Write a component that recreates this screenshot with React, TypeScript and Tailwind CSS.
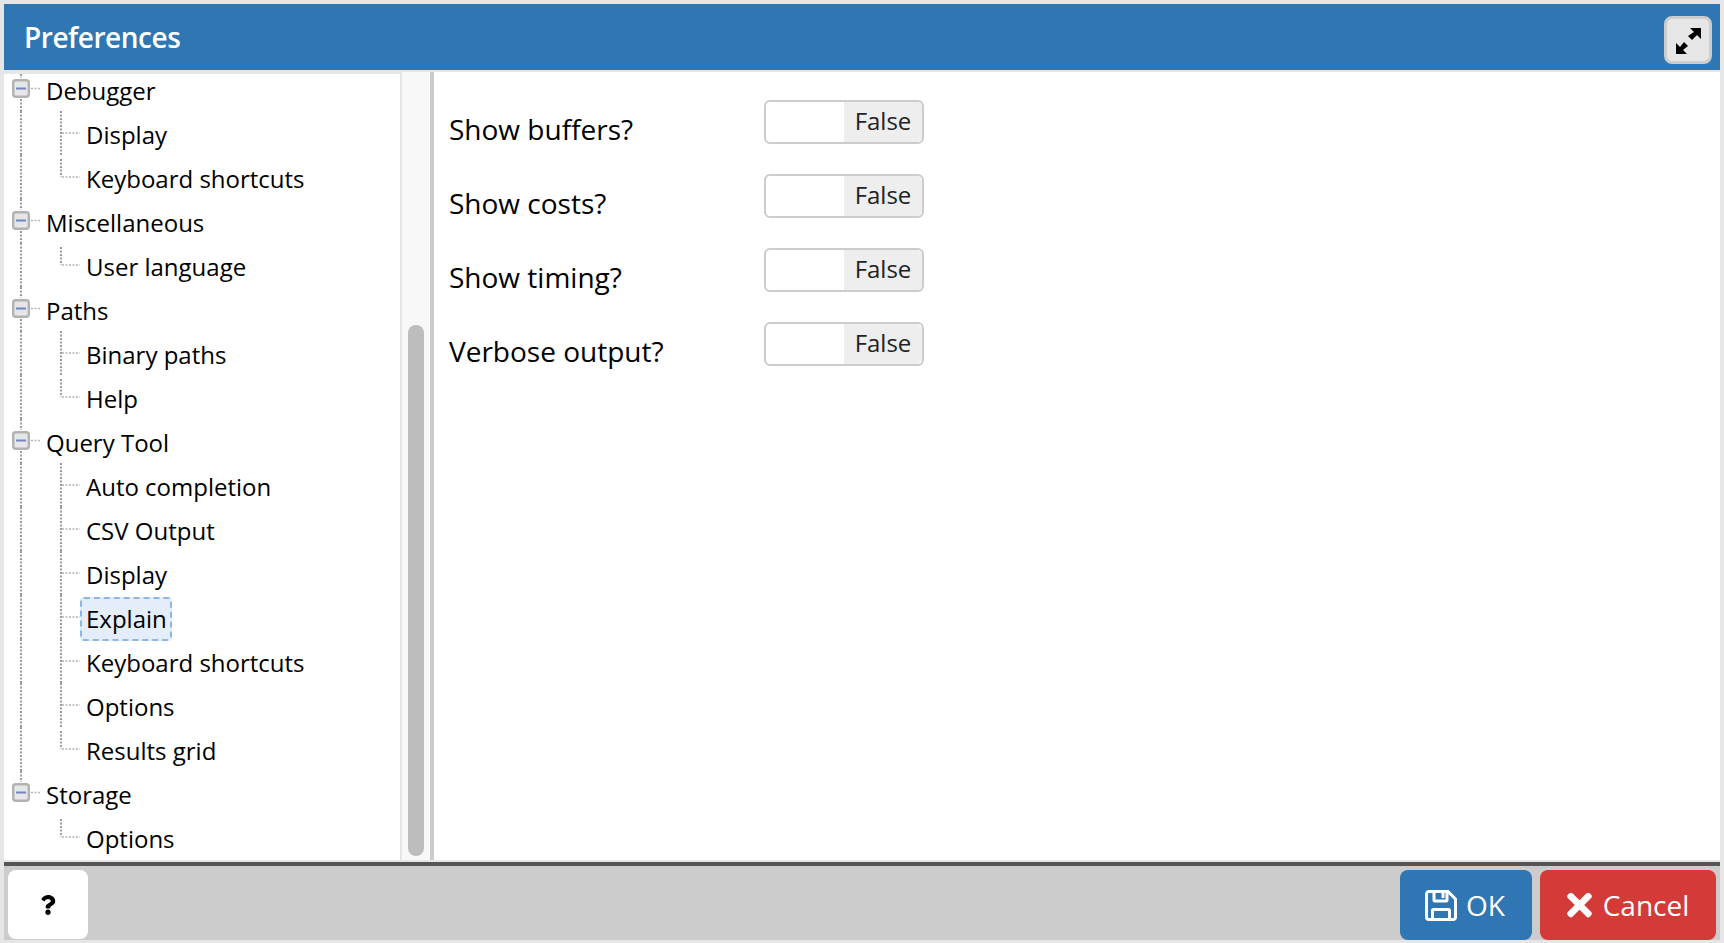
import { FaQuestion, FaTimes } from "react-icons/fa";

type Row = {
  label: string;
  root?: boolean;
  last?: boolean;
  selected?: boolean;
  tail?: boolean;
};

const rows: Row[] = [
  { label: "Debugger", root: true },
  { label: "Display" },
  { label: "Keyboard shortcuts", last: true },
  { label: "Miscellaneous", root: true },
  { label: "User language", last: true },
  { label: "Paths", root: true },
  { label: "Binary paths" },
  { label: "Help", last: true },
  { label: "Query Tool", root: true },
  { label: "Auto completion" },
  { label: "CSV Output" },
  { label: "Display" },
  { label: "Explain", selected: true },
  { label: "Keyboard shortcuts" },
  { label: "Options" },
  { label: "Results grid", last: true },
  { label: "Storage", root: true, tail: true },
  { label: "Options", last: true, tail: true },
];

const fields = ["Show buffers?", "Show costs?", "Show timing?", "Verbose output?"];

const vDots = { stroke: "#9c9c9c", strokeWidth: 2, strokeDasharray: "2 1.5", fill: "none" };
const hDots = { stroke: "#b4b4b4", strokeWidth: 1.5, strokeDasharray: "2 1.5", fill: "none" };

function RootGuide({ tail }: { tail?: boolean }) {
  return (
    <svg width="42" height="44" className="shrink-0">
      <line x1="17" y1="0" x2="17" y2="11" {...vDots} />
      {!tail && <line x1="17" y1="32" x2="17" y2="44" {...vDots} />}
      <line x1="27" y1="21.5" x2="36" y2="21.5" {...hDots} />
      <rect x="9.2" y="13.2" width="15.6" height="16.6" rx="2.5" fill="#e6e6e8" stroke="#b2b2b2" strokeWidth="2.4" />
      <rect x="12" y="20.5" width="10" height="2" fill="#6f86c4" />
    </svg>
  );
}

function ChildGuide({ last, tail }: { last?: boolean; tail?: boolean }) {
  return (
    <svg width="82" height="44" className="shrink-0">
      {!tail && <line x1="17" y1="0" x2="17" y2="44" {...vDots} />}
      <line x1="57" y1={last ? 4 : 0} x2="57" y2={last ? 22 : 44} {...vDots} />
      <line x1="58" y1="22" x2="76" y2="22" {...hDots} />
    </svg>
  );
}

function TreeRow({ row }: { row: Row }) {
  return (
    <div className="flex h-11 items-center text-[24px] text-black">
      {row.root ? <RootGuide tail={row.tail} /> : <ChildGuide last={row.last} tail={row.tail} />}
      {row.selected ? (
        <span className="-ml-[6px] mt-[4px] flex h-[44px] items-center rounded border-2 border-dashed border-[#8fb5e4] bg-[#e3eefa] pl-[4px] pr-[3px]">
          {row.label}
        </span>
      ) : (
        <span className="mt-[3px]">{row.label}</span>
      )}
    </div>
  );
}

function SwitchField({ label }: { label: string }) {
  return (
    <div className="flex h-[74px] items-start">
      <span className="mt-[7px] w-[315px] text-[28px] leading-[44px] text-black">{label}</span>
      <div className="flex h-11 w-[160px] overflow-hidden rounded-md border-2 border-[#cccccc] bg-white">
        <div className="w-[78px]" />
        <div className="flex flex-1 items-center justify-center bg-[#eeeeee] pb-[2px] text-[24px] text-[#222222]">False</div>
      </div>
    </div>
  );
}

function ExpandIcon() {
  return (
    <svg width="38" height="38" viewBox="0 0 38 38" fill="currentColor">
      <polygon points="21,7 32,7 32,18 28,14 23,19 19,15 25,11" />
      <polygon points="7,33 7,22 11,26 15,21 19,25 14,29 18,33" />
    </svg>
  );
}

function SaveIcon() {
  return (
    <svg width="32" height="31" viewBox="0 0 32 31" fill="none" stroke="currentColor" strokeWidth="3">
      <path d="M4 1.5H23L30.5 9V27a2.5 2.5 0 0 1-2.5 2.5H4A2.5 2.5 0 0 1 1.500 27V4A2.500 2.500 0 0 1 4 1.500z" />
      <path d="M9 2v8a1 1 0 0 0 1 1h11a1 1 0 0 0 1-1V2" />
      <path d="M7.500 29V20.500a1 1 0 0 1 1-1h15a1 1 0 0 1 1 1V29" />
      <rect x="16.500" y="2" width="3" height="6" fill="currentColor" stroke="none" />
    </svg>
  );
}

export default function App() {
  return (
    <div className="flex h-[943px] w-full flex-col bg-[#e6e6e6] pb-[3px] pl-1 pr-1 pt-1 font-['Open_Sans',sans-serif]">
      <header className="flex h-[66px] shrink-0 items-center justify-between bg-[#2f76b2] pl-[20px] pr-[8px]">
        <h1 className="text-[28px] font-semibold tracking-[-0.45px] text-white">Preferences</h1>
        <button className="mt-[5px] flex h-[48px] w-[48px] items-center justify-center rounded-lg border-[3px] border-[#cccccc] bg-[#e6e6e6] text-black">
          <ExpandIcon />
        </button>
      </header>

      <main className="flex min-h-0 flex-1 bg-[#e6e6e6] pb-[2px] pt-[2px]">
        <aside className="mt-[2px] flex w-[396px] shrink-0 overflow-hidden bg-white">
          <div className="-mt-[7px] w-full">
            {rows.map((row, i) => (
              <TreeRow key={i} row={row} />
            ))}
          </div>
        </aside>
        <div className="flex w-[30px] shrink-0 flex-col border-l-2 border-[#e6e6e6] bg-[#f8f8f8] px-[6px] pb-[4px] pt-[253px]">
          <div className="flex-1 rounded-lg bg-[#bdbdbd]" />
        </div>
        <section className="flex-1 border-l-4 border-[#cccccc] bg-white pl-[15px] pt-[28px]">
          {fields.map((f) => (
            <SwitchField key={f} label={f} />
          ))}
        </section>
      </main>

      <footer className="flex h-[78px] shrink-0 items-stretch justify-between border-t-4 border-[#555555] bg-[#cccccc] pl-[4px] pr-[4px] pt-[4px]">
        <button className="mb-px flex w-[80px] items-center justify-center rounded-lg bg-white text-black">
          <FaQuestion className="h-[20px] w-[20px]" />
        </button>
        <div className="flex gap-2">
          <button className="flex w-[132px] items-center justify-center gap-[9px] rounded-lg bg-[#2f76b2] pr-[2px] text-[28px] text-white">
            <SaveIcon />
            OK
          </button>
          <button className="flex w-[176px] items-center justify-center gap-[11px] rounded-lg bg-[#d43a38] text-[28px] text-white">
            <FaTimes className="h-[36px] w-[25px]" />
            Cancel
          </button>
        </div>
      </footer>
    </div>
  );
}
